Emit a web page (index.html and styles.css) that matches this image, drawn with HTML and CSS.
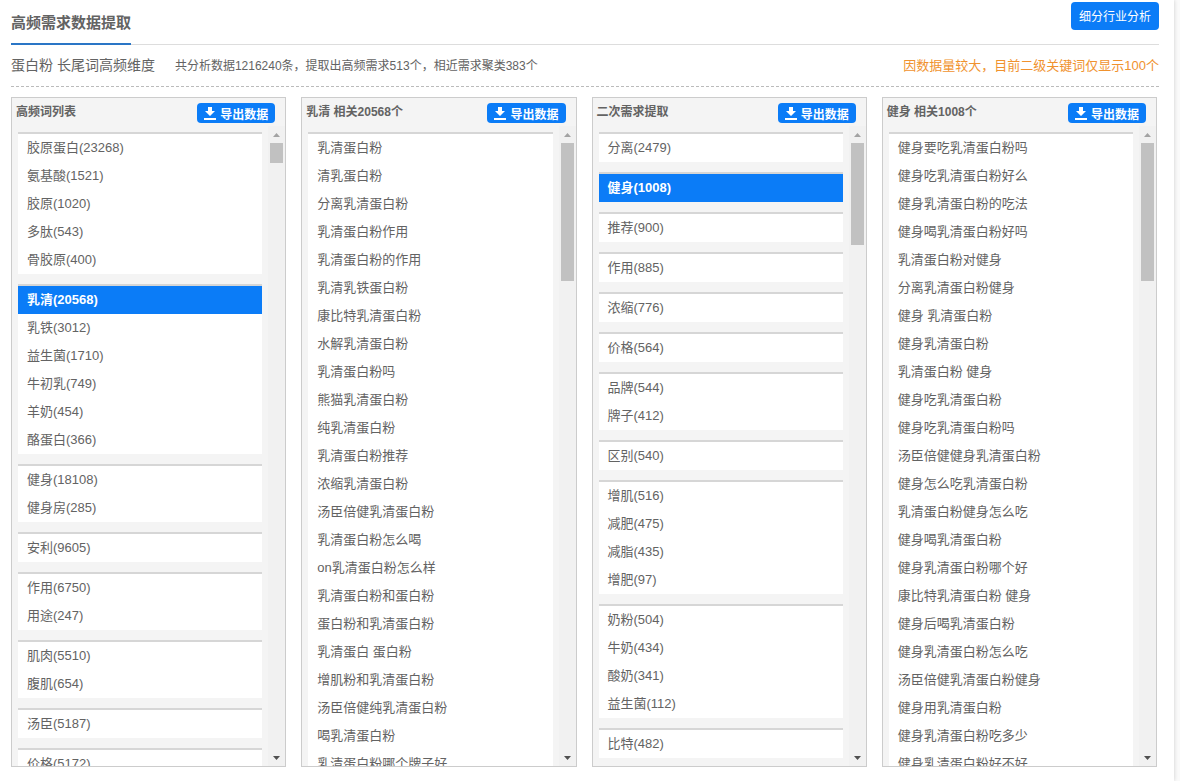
FILE: index.html
```html
<!DOCTYPE html>
<html lang="zh-CN">
<head>
<meta charset="utf-8">
<title>高频需求数据提取</title>
<link rel="stylesheet" href="styles.css">
</head>
<body>
<svg class="sprite" aria-hidden="true">
  <symbol id="download" viewBox="0 0 12 13"><path d="M4 0h4v4h3L6 9 1 4h3zM0 11h12v2H0z"/></symbol>
  <symbol id="up" viewBox="0 0 7 4"><path d="M3.5 0 7 4H0z"/></symbol>
  <symbol id="down" viewBox="0 0 7 4"><path d="M0 0h7L3.5 4z"/></symbol>
</svg>
<main class="page">
  <header class="topbar">
    <h1 class="title">高频需求数据提取</h1>
    <button class="analyze" type="button">细分行业分析</button>
  </header>
  <div class="summary">
    <h2 class="dimension">蛋白粉 长尾词高频维度</h2>
    <p class="stats">共分析数据1216240条，提取出高频需求513个，相近需求聚类383个</p>
    <p class="notice">因数据量较大，目前二级关键词仅显示100个</p>
  </div>
  <div class="panels">
    <section class="panel">
      <header class="panel-head">
        <h3 class="panel-title">高频词列表</h3>
        <button class="export" type="button"><svg class="export-icon"><use href="#download"/></svg>导出数据</button>
      </header>
      <div class="panel-body">
        <div class="list">
          <div class="group">
            <button class="word" type="button">胶原蛋白(23268)</button>
            <button class="word" type="button">氨基酸(1521)</button>
            <button class="word" type="button">胶原(1020)</button>
            <button class="word" type="button">多肽(543)</button>
            <button class="word" type="button">骨胶原(400)</button>
          </div>
          <div class="group">
            <button class="word active" type="button">乳清(20568)</button>
            <button class="word" type="button">乳铁(3012)</button>
            <button class="word" type="button">益生菌(1710)</button>
            <button class="word" type="button">牛初乳(749)</button>
            <button class="word" type="button">羊奶(454)</button>
            <button class="word" type="button">酪蛋白(366)</button>
          </div>
          <div class="group">
            <button class="word" type="button">健身(18108)</button>
            <button class="word" type="button">健身房(285)</button>
          </div>
          <div class="group">
            <button class="word" type="button">安利(9605)</button>
          </div>
          <div class="group">
            <button class="word" type="button">作用(6750)</button>
            <button class="word" type="button">用途(247)</button>
          </div>
          <div class="group">
            <button class="word" type="button">肌肉(5510)</button>
            <button class="word" type="button">腹肌(654)</button>
          </div>
          <div class="group">
            <button class="word" type="button">汤臣(5187)</button>
          </div>
          <div class="group">
            <button class="word" type="button">价格(5172)</button>
          </div>
        </div>
        <div class="scrollbar">
          <svg class="arrow"><use href="#up"/></svg>
          <div class="track"><div class="thumb thumb-short"></div></div>
          <svg class="arrow arrow-down"><use href="#down"/></svg>
        </div>
      </div>
    </section>
    <section class="panel">
      <header class="panel-head">
        <h3 class="panel-title">乳清 相关20568个</h3>
        <button class="export" type="button"><svg class="export-icon"><use href="#download"/></svg>导出数据</button>
      </header>
      <div class="panel-body">
        <div class="list">
          <ul class="group">
            <li class="word">乳清蛋白粉</li>
            <li class="word">清乳蛋白粉</li>
            <li class="word">分离乳清蛋白粉</li>
            <li class="word">乳清蛋白粉作用</li>
            <li class="word">乳清蛋白粉的作用</li>
            <li class="word">乳清乳铁蛋白粉</li>
            <li class="word">康比特乳清蛋白粉</li>
            <li class="word">水解乳清蛋白粉</li>
            <li class="word">乳清蛋白粉吗</li>
            <li class="word">熊猫乳清蛋白粉</li>
            <li class="word">纯乳清蛋白粉</li>
            <li class="word">乳清蛋白粉推荐</li>
            <li class="word">浓缩乳清蛋白粉</li>
            <li class="word">汤臣倍健乳清蛋白粉</li>
            <li class="word">乳清蛋白粉怎么喝</li>
            <li class="word">on乳清蛋白粉怎么样</li>
            <li class="word">乳清蛋白粉和蛋白粉</li>
            <li class="word">蛋白粉和乳清蛋白粉</li>
            <li class="word">乳清蛋白 蛋白粉</li>
            <li class="word">增肌粉和乳清蛋白粉</li>
            <li class="word">汤臣倍健纯乳清蛋白粉</li>
            <li class="word">喝乳清蛋白粉</li>
            <li class="word">乳清蛋白粉哪个牌子好</li>
          </ul>
        </div>
        <div class="scrollbar">
          <svg class="arrow"><use href="#up"/></svg>
          <div class="track"><div class="thumb thumb-long"></div></div>
          <svg class="arrow arrow-down"><use href="#down"/></svg>
        </div>
      </div>
    </section>
    <section class="panel">
      <header class="panel-head">
        <h3 class="panel-title">二次需求提取</h3>
        <button class="export" type="button"><svg class="export-icon"><use href="#download"/></svg>导出数据</button>
      </header>
      <div class="panel-body">
        <div class="list">
          <div class="group">
            <button class="word" type="button">分离(2479)</button>
          </div>
          <div class="group">
            <button class="word active" type="button">健身(1008)</button>
          </div>
          <div class="group">
            <button class="word" type="button">推荐(900)</button>
          </div>
          <div class="group">
            <button class="word" type="button">作用(885)</button>
          </div>
          <div class="group">
            <button class="word" type="button">浓缩(776)</button>
          </div>
          <div class="group">
            <button class="word" type="button">价格(564)</button>
          </div>
          <div class="group">
            <button class="word" type="button">品牌(544)</button>
            <button class="word" type="button">牌子(412)</button>
          </div>
          <div class="group">
            <button class="word" type="button">区别(540)</button>
          </div>
          <div class="group">
            <button class="word" type="button">增肌(516)</button>
            <button class="word" type="button">减肥(475)</button>
            <button class="word" type="button">减脂(435)</button>
            <button class="word" type="button">增肥(97)</button>
          </div>
          <div class="group">
            <button class="word" type="button">奶粉(504)</button>
            <button class="word" type="button">牛奶(434)</button>
            <button class="word" type="button">酸奶(341)</button>
            <button class="word" type="button">益生菌(112)</button>
          </div>
          <div class="group">
            <button class="word" type="button">比特(482)</button>
          </div>
        </div>
        <div class="scrollbar">
          <svg class="arrow"><use href="#up"/></svg>
          <div class="track"><div class="thumb thumb-medium"></div></div>
          <svg class="arrow arrow-down"><use href="#down"/></svg>
        </div>
      </div>
    </section>
    <section class="panel">
      <header class="panel-head">
        <h3 class="panel-title">健身 相关1008个</h3>
        <button class="export" type="button"><svg class="export-icon"><use href="#download"/></svg>导出数据</button>
      </header>
      <div class="panel-body">
        <div class="list">
          <ul class="group">
            <li class="word">健身要吃乳清蛋白粉吗</li>
            <li class="word">健身吃乳清蛋白粉好么</li>
            <li class="word">健身乳清蛋白粉的吃法</li>
            <li class="word">健身喝乳清蛋白粉好吗</li>
            <li class="word">乳清蛋白粉对健身</li>
            <li class="word">分离乳清蛋白粉健身</li>
            <li class="word">健身 乳清蛋白粉</li>
            <li class="word">健身乳清蛋白粉</li>
            <li class="word">乳清蛋白粉 健身</li>
            <li class="word">健身吃乳清蛋白粉</li>
            <li class="word">健身吃乳清蛋白粉吗</li>
            <li class="word">汤臣倍健健身乳清蛋白粉</li>
            <li class="word">健身怎么吃乳清蛋白粉</li>
            <li class="word">乳清蛋白粉健身怎么吃</li>
            <li class="word">健身喝乳清蛋白粉</li>
            <li class="word">健身乳清蛋白粉哪个好</li>
            <li class="word">康比特乳清蛋白粉 健身</li>
            <li class="word">健身后喝乳清蛋白粉</li>
            <li class="word">健身乳清蛋白粉怎么吃</li>
            <li class="word">汤臣倍健乳清蛋白粉健身</li>
            <li class="word">健身用乳清蛋白粉</li>
            <li class="word">健身乳清蛋白粉吃多少</li>
            <li class="word">健身乳清蛋白粉好不好</li>
          </ul>
        </div>
        <div class="scrollbar">
          <svg class="arrow"><use href="#up"/></svg>
          <div class="track"><div class="thumb thumb-long"></div></div>
          <svg class="arrow arrow-down"><use href="#down"/></svg>
        </div>
      </div>
    </section>
  </div>
</main>
</body>
</html>
```
FILE: styles.css
```css
* {
  box-sizing: border-box;
  margin: 0;
  padding: 0;
}

body {
  background: #fafafa;
  color: #636363;
  font: 13px "Liberation Sans", "Noto Sans CJK SC", sans-serif;
}

button {
  border: 0;
  color: inherit;
  font: inherit;
  cursor: pointer;
}

ul {
  list-style: none;
}

.sprite {
  display: none;
}

.page {
  display: flex;
  flex-direction: column;
  height: 100vh;
  margin-right: 6px;
  padding: 0 15px 14px 11px;
  background: #fff;
  box-shadow: 0 0 4px #ccc;
}

.topbar {
  display: flex;
  flex: none;
  justify-content: space-between;
  align-items: flex-start;
  height: 45px;
  border-bottom: 1px solid #ddd;
}

.title {
  height: 45px;
  border-bottom: 2px solid #2a76c6;
  font-size: 15px;
  line-height: 46px;
}

.analyze {
  height: 28px;
  margin-top: 2px;
  padding: 0 8px 2px;
  border-radius: 4px;
  background: #0b7cf7;
  color: #fff;
  font-size: 12px;
}

.summary {
  display: flex;
  flex: none;
  align-items: center;
  height: 42px;
  padding-bottom: 3px;
  border-bottom: 1px dashed #bbb;
}

.dimension {
  margin-right: 20px;
  font-size: 14px;
  font-weight: 400;
}

.stats {
  font-size: 12px;
}

.notice {
  margin-left: auto;
  color: #f0922e;
}

.panels {
  display: grid;
  flex: 1;
  grid-template-columns: repeat(4, minmax(0, 1fr));
  grid-template-rows: minmax(0, 1fr);
  gap: 15px;
  min-height: 0;
  margin-top: 10px;
  padding-right: 2px;
}

.panel {
  display: flex;
  flex-direction: column;
  border: 1px solid #ccc;
  background: #f4f4f4;
}

.panel-head {
  display: flex;
  flex: none;
  justify-content: space-between;
  align-items: flex-start;
  height: 28px;
  padding: 5px 10px 0 4px;
}

.panel-title {
  font-size: 12px;
  line-height: 18px;
}

.export {
  display: flex;
  align-items: center;
  gap: 4px;
  height: 20px;
  padding: 0 7px;
  border-radius: 4px;
  background: #0b7cf7;
  color: #fff;
  font-size: 12px;
  font-weight: 700;
}

.export-icon {
  width: 12px;
  height: 13px;
  fill: currentColor;
}

.panel-body {
  display: flex;
  flex: 1;
  min-height: 0;
}

.list {
  flex: 1;
  padding: 6px 6px 0;
  overflow: hidden;
}

.group {
  margin-bottom: 10px;
  border-top: 2px solid #d6d6d6;
  background: #fff;
}

.word {
  display: block;
  width: 100%;
  height: 28px;
  padding: 0 9px;
  background: none;
  line-height: 28px;
  text-align: left;
}

button.word {
  line-height: 26px;
}

.active {
  background: #0b7cf7;
  color: #fff;
  font-weight: 700;
}

.scrollbar {
  display: flex;
  flex-direction: column;
  width: 17px;
  background: #f1f1f1;
}

.arrow {
  width: 17px;
  height: 17px;
  padding: 7px 5px 6px;
  fill: #a3a3a3;
}

.arrow-down {
  fill: #505050;
}

.track {
  flex: 1;
  padding: 0 2px;
}

.thumb {
  background: #c1c1c1;
}

.thumb-short {
  height: 20px;
}

.thumb-medium {
  height: 102px;
}

.thumb-long {
  height: 138px;
}
```
